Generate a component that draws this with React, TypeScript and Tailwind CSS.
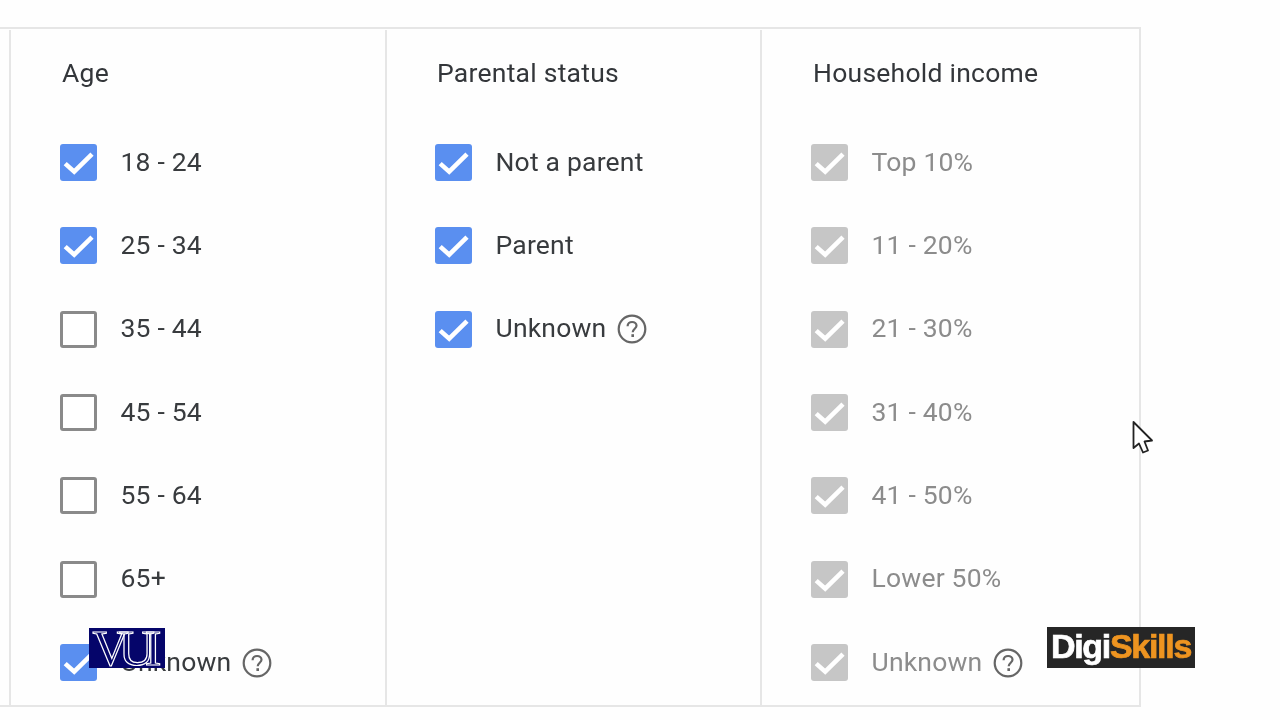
import React from "react";

const Check = () => (
  <svg viewBox="0 0 37 37" className="w-full h-full" fill="none">
    <path d="M5.2 19.6L14.2 27.6L32 10.2" stroke="#ffffff" strokeWidth="4.6" />
  </svg>
);

const Box = ({ state }: { state: "on" | "off" | "dis" }) => {
  if (state === "off")
    return <div className="mt-[2px] w-[37px] h-[37px] shrink-0 rounded-[3px] border-[3px] border-[#8a8a8a] bg-white" />;
  return (
    <div className={`mt-[2px] w-[37px] h-[37px] shrink-0 rounded-[3px] ${state === "on" ? "bg-[#5a8ff0]" : "bg-[#c6c6c6]"}`}>
      <Check />
    </div>
  );
};

const Help = () => (
  <svg width="30" height="30" viewBox="0 0 30 30" fill="none" className="mt-[2px] ml-[10.5px] shrink-0">
    <circle cx="15" cy="15" r="13.3" stroke="#666666" strokeWidth="2.2" />
    <path d="M10.6 12.2c0-2.6 2-4.2 4.5-4.2 2.5 0 4.4 1.6 4.4 3.8 0 2.8-3.8 3.1-3.8 6.4" stroke="#666666" strokeWidth="2.2" />
    <rect x="14.4" y="20.2" width="2.6" height="2.8" fill="#666666" />
  </svg>
);

type Item = { label: string; state: "on" | "off" | "dis"; help?: boolean };

const Column = ({ title, items, className }: { title: string; items: Item[]; className: string }) => (
  <div className={className}>
    <div className="pl-[2px] pt-[25px] h-[90.5px] text-[26.5px] leading-[36px] tracking-[0.25px] text-[#33363a]">{title}</div>
    <div className="flex flex-col">
      {items.map((it) => (
        <div key={it.label} className="h-[83.33px] flex items-center">
          <Box state={it.state} />
          <span className={`ml-[23.5px] text-[26.5px] tracking-[0.2px] ${it.state === "dis" ? "text-[#8c8c8c]" : "text-[#383b3e]"}`}>
            {it.label}
          </span>
          {it.help && <Help />}
        </div>
      ))}
    </div>
  </div>
);

export default function App() {
  const age: Item[] = [
    { label: "18 - 24", state: "on" },
    { label: "25 - 34", state: "on" },
    { label: "35 - 44", state: "off" },
    { label: "45 - 54", state: "off" },
    { label: "55 - 64", state: "off" },
    { label: "65+", state: "off" },
    { label: "Unknown", state: "on", help: true },
  ];
  const parental: Item[] = [
    { label: "Not a parent", state: "on" },
    { label: "Parent", state: "on" },
    { label: "Unknown", state: "on", help: true },
  ];
  const income: Item[] = ["Top 10%", "11 - 20%", "21 - 30%", "31 - 40%", "41 - 50%", "Lower 50%"].map((label) => ({
    label,
    state: "dis" as const,
  }));
  income.push({ label: "Unknown", state: "dis", help: true });

  return (
    <div className="relative w-[1280px] h-[720px] overflow-hidden bg-[#fefefe] pt-[26.5px] font-['Roboto',sans-serif] blur-[0.4px]">
      <div className="w-[1141px] h-[680px] border-t-2 border-b-2 border-r-2 border-[#e6e6e6] pl-[9px] pt-px flex">
        <Column title="Age" items={age} className="w-[378px] pl-[49px] border-l-2 border-r-2 border-[#e6e6e6]" />
        <Column title="Parental status" items={parental} className="w-[375px] pl-[48px] border-r-2 border-[#e6e6e6]" />
        <Column title="Household income" items={income} className="flex-1 pl-[49px]" />
      </div>

      {/* VU logo */}
      <div className="absolute left-[89px] top-[628px] w-[76px] h-[40px] bg-[#05056a] flex items-center justify-center">
        <span className="pr-[10px] text-[50px] leading-[40px] tracking-[-10px] text-transparent [-webkit-text-stroke:1.2px_#ffffff] font-['Liberation_Serif',serif]">
          VUI
        </span>
      </div>

      {/* DigiSkills logo */}
      <div className="absolute left-[1047px] top-[627px] w-[148px] h-[41px] bg-[#262626] flex items-center justify-center">
        <span className="pb-[3px] text-[34px] leading-[38px] font-bold tracking-[-1.3px] text-white [-webkit-text-stroke:0.7px_currentColor] font-['Liberation_Sans',sans-serif]">
          Digi<span className="text-[#ee9420]">Skills</span>
        </span>
      </div>

      {/* Cursor */}
      <svg className="absolute left-[1131px] top-[420px]" width="24" height="36" viewBox="0 0 24 36" fill="none">
        <path
          d="M2.5 2V28L8 23.5L12 32.5L17 30.5L13.5 21.5L21 20.5Z"
          fill="#ffffff"
          stroke="#222222"
          strokeWidth="1.8"
          strokeLinejoin="round"
        />
      </svg>
    </div>
  );
}
